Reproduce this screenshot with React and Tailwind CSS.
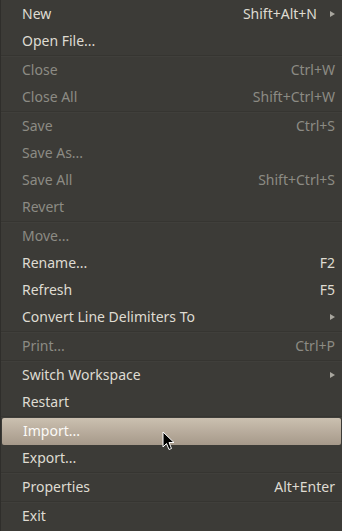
import React from 'react';

const items = [
  { label: 'New', shortcut: 'Shift+Alt+N', sub: true },
  { label: 'Open File...' },
  'sep',
  { label: 'Close', shortcut: 'Ctrl+W', disabled: true },
  { label: 'Close All', shortcut: 'Shift+Ctrl+W', disabled: true },
  'sep',
  { label: 'Save', shortcut: 'Ctrl+S', disabled: true },
  { label: 'Save As...', disabled: true },
  { label: 'Save All', shortcut: 'Shift+Ctrl+S', disabled: true },
  { label: 'Revert', disabled: true },
  'sep',
  { label: 'Move...', disabled: true },
  { label: 'Rename...', shortcut: 'F2' },
  { label: 'Refresh', shortcut: 'F5' },
  { label: 'Convert Line Delimiters To', sub: true },
  'sep',
  { label: 'Print...', shortcut: 'Ctrl+P', disabled: true },
  'sep',
  { label: 'Switch Workspace', sub: true },
  { label: 'Restart' },
  'sep',
  { label: 'Import...', active: true },
  { label: 'Export...' },
  'sep',
  { label: 'Properties', shortcut: 'Alt+Enter' },
  'sep',
  { label: 'Exit' },
];

function Cursor() {
  return (
    <svg className="absolute left-[161px] top-[431px]" width="14" height="20" viewBox="0 0 14 20">
      <path d="M1 1 L1 16 L4.5 12.5 L7 18.5 L9.5 17.5 L7 11.5 L12 11.5 Z" fill="#000" stroke="#fff" strokeWidth="1" strokeLinejoin="round" />
    </svg>
  );
}

function MenuItem({ item }) {
  const color = item.disabled ? 'text-[#8c8b84]' : item.active ? 'text-[#fbfaf7]' : 'text-[#dfdbd2]';
  return (
    <div
      className={`h-[27px] flex items-center pb-[1px] pl-[21px] pr-[7px] ${color} ${
        item.active ? 'bg-gradient-to-b from-[#cbc0b0] to-[#a6998a] rounded-[2px] mx-[1px] pl-[20px] pr-[6px]' : ''
      }`}
    >
      <span className="flex-1 whitespace-nowrap">{item.label}</span>
      {item.shortcut && <span className="whitespace-nowrap">{item.shortcut}</span>}
      {item.sub && (
        <span className={`w-[9px] flex justify-end ${item.shortcut ? 'ml-[9px]' : ''}`}>
          <svg width="5" height="6" viewBox="0 0 5 6">
            <path d="M0 0 L5 3 L0 6 Z" fill="#a8a69e" />
          </svg>
        </span>
      )}
    </div>
  );
}

export default function App() {
  return (
    <div
      className="relative w-[342px] h-[531px] bg-[#3c3b37] border-l border-[#2f2e2b] pt-[1px] text-[14px] leading-none overflow-hidden"
      style={{ fontFamily: '"Noto Sans", "Open Sans", sans-serif' }}
    >
      {items.map((item, i) =>
        item === 'sep' ? (
          <div key={i} className="h-[2px] flex flex-col">
            <div className="h-[1px] bg-[#363531]" />
            <div className="h-[1px] bg-[#403f3b]" />
          </div>
        ) : (
          <MenuItem key={i} item={item} />
        )
      )}
      <Cursor />
    </div>
  );
}
